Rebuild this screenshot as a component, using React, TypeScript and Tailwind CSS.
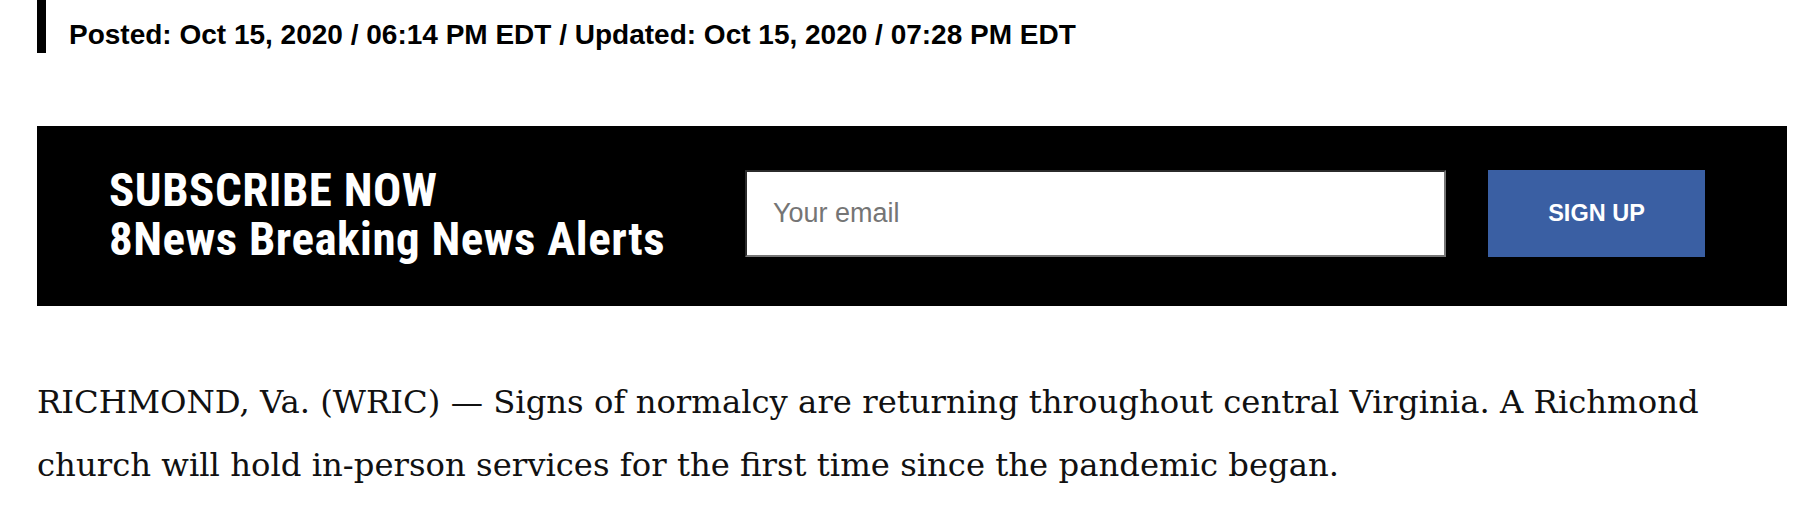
export default function App() {
  return (
    <div className="w-full h-[518px] bg-white pl-[37px] pr-[17px] overflow-hidden">
      <div className="h-[53px] border-l-[9px] border-black pl-[23px] flex items-center">
        <p className="font-['Liberation_Sans',Arial,sans-serif] font-bold text-[28px] leading-none text-black pt-[16px] whitespace-nowrap">
          Posted: Oct 15, 2020 / 06:14 PM EDT / Updated: Oct 15, 2020 / 07:28 PM EDT
        </p>
      </div>

      <section className="mt-[73px] h-[180px] bg-black flex items-center pl-[72px]">
        <div className="mb-[4px] w-[636px] shrink-0 font-['Roboto',sans-serif] font-bold text-white text-[47px] leading-[49px] tracking-[0.5px] font-stretch-condensed">
          <div>SUBSCRIBE NOW</div>
          <div>8News Breaking News Alerts</div>
        </div>
        <input
          type="email"
          placeholder="Your email"
          className="mb-[5px] w-[701px] h-[87px] shrink-0 bg-white border-2 border-t-[#2b2b2b] border-l-[#2b2b2b] border-b-[#767676] border-r-[#767676] px-[26px] font-['Liberation_Sans',Arial,sans-serif] text-[27px] text-black placeholder:text-[#757575] outline-none"
        />
        <button className="mb-[5px] ml-[42px] w-[217px] h-[87px] shrink-0 bg-[#3a5fa3] text-white font-['Liberation_Sans',Arial,sans-serif] font-bold text-[23.5px] uppercase">
          Sign up
        </button>
      </section>

      <p className="mt-[65px] font-['DejaVu_Serif',serif] text-[32.3px] leading-[63px] text-[#111]">
        RICHMOND, Va. (WRIC) — Signs of normalcy are returning throughout central Virginia. A Richmond church will hold in-person services for the first time since the pandemic began.
      </p>
    </div>
  );
}
